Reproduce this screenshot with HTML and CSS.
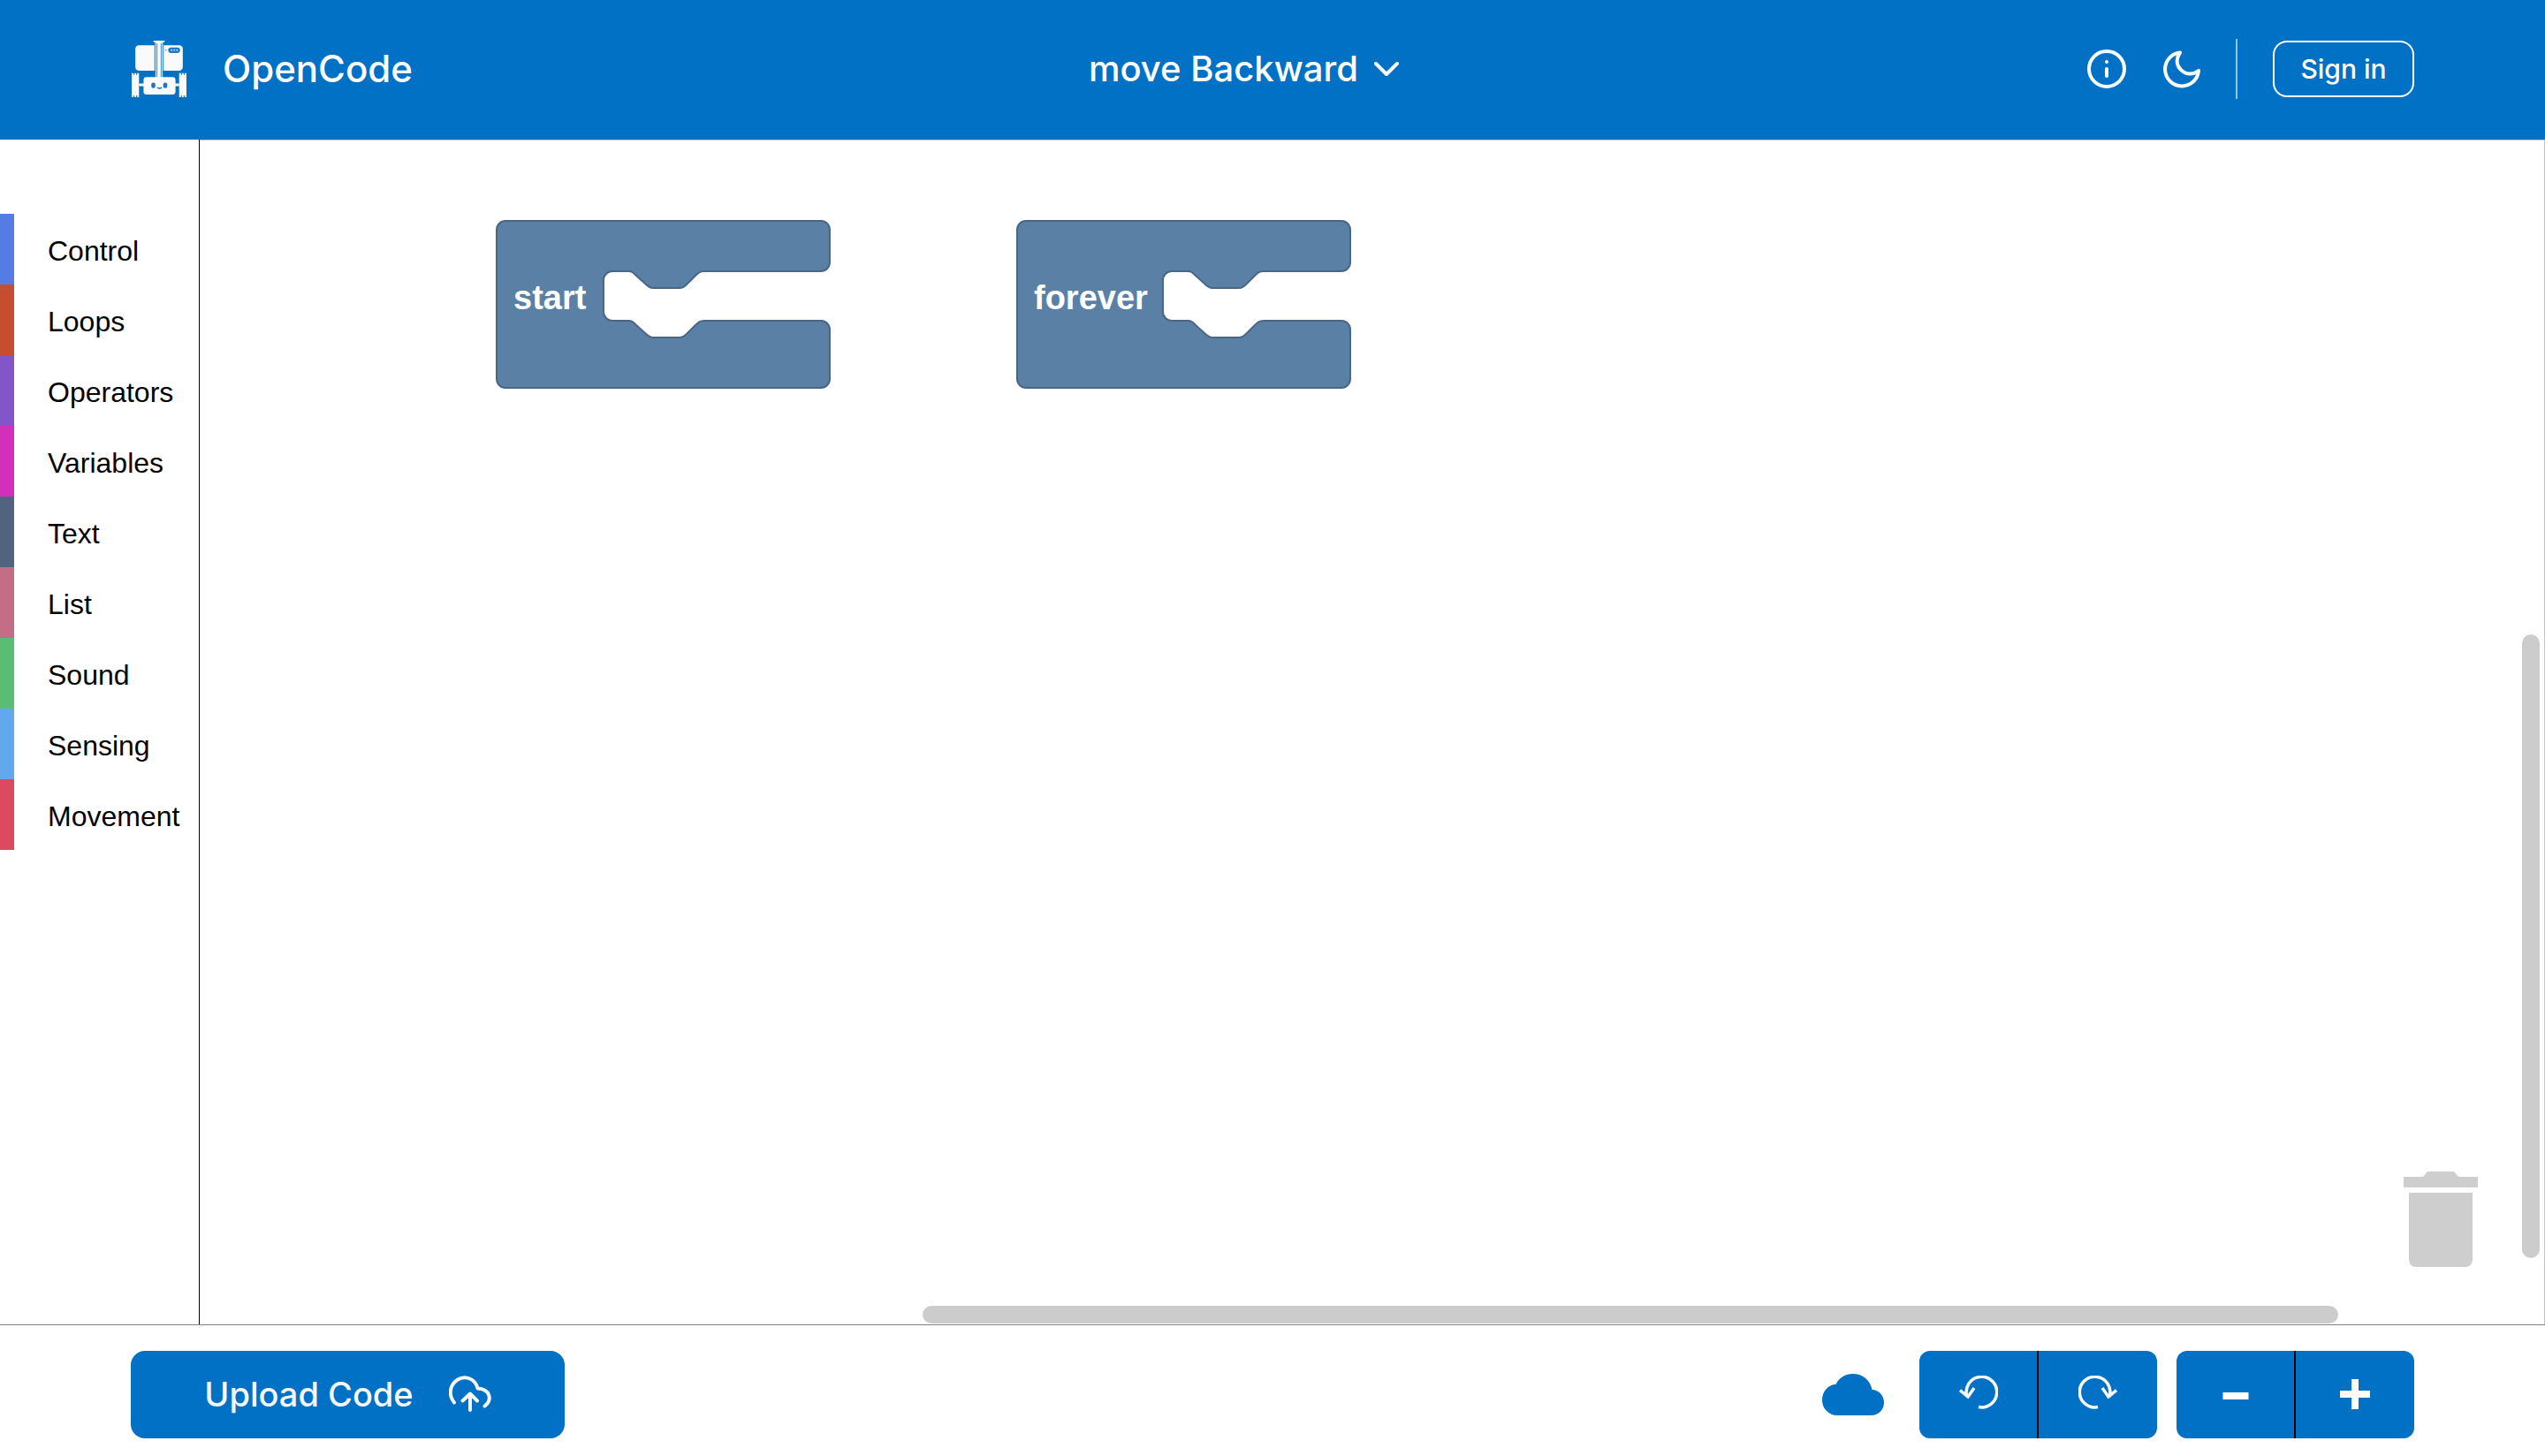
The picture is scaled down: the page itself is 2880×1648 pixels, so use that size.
FILE: index.html
```html
<!DOCTYPE html>
<html lang="en">
<head>
<meta charset="utf-8">
<title>OpenCode</title>
<link rel="stylesheet" href="styles.css">
</head>
<body>
<header class="topbar">
  <a class="brand" href="#">
    <svg class="brand-logo" width="64" height="64" viewBox="0 0 62 62" fill="#fafafa" aria-hidden="true">
      <path d="M9 5H26V33H9a4 4 0 0 1-4-4V9a4 4 0 0 1 4-4z"/>
      <path d="M36 5H53a4 4 0 0 1 4 4V29a4 4 0 0 1-4 4H36z"/>
      <path d="M25 0H37V2H35V41H27V2H25z"/>
      <path d="M28.500 3V41M33.500 3V41" stroke="#5a9fda" stroke-width="1.500"/>
      <path d="M26.500 3V33M35.500 3V33" stroke="#5a9fda" stroke-width="1"/>
      <rect x="41" y="7.500" width="13" height="6" rx="3" fill="#1d77c6"/>
      <path d="M44 10.500h1.500M47 10.500h1.500M50 10.500h1.500" stroke="#b9d8f0" stroke-width="2"/>
      <circle cx="38.500" cy="10.500" r="1" fill="#7db4e2"/>
      <path d="M9 47h6v3H9zM47 47h6v3h-6z"/>
      <rect x="14" y="40" width="35" height="19" rx="3"/>
      <path d="M1 35.500h2v2h1v-2h2v2h1v-2h2V62H7v-2H6v2H4v-2H3v2H1zM53 35.500h2v2h1v-2h2v2h1v-2h2V62h-2v-2h-1v2h-2v-2h-1v2h-2z"/>
      <rect x="22.500" y="46" width="4.500" height="6" rx="2.200" fill="#1d77c6"/>
      <rect x="35.500" y="46" width="4.500" height="6" rx="2.200" fill="#1d77c6"/>
      <path d="M29 51.500q2.500 1.500 5 0" fill="none" stroke="#1d77c6" stroke-width="1.500"/>
    </svg>
    <span>OpenCode</span>
  </a>
  <button class="project" type="button">
    <span>move Backward</span>
    <svg width="28" height="18" viewBox="0 0 28 18" fill="none" stroke="#fff" stroke-width="4" stroke-linecap="round" stroke-linejoin="round" aria-hidden="true"><path d="M2 3l12 12L26 3"/></svg>
  </button>
  <div class="tools">
    <button class="icon-button" type="button" aria-label="About">
      <svg width="44" height="44" viewBox="0 0 44 44" fill="none" stroke="#fff" stroke-width="4" stroke-linecap="round" aria-hidden="true"><circle cx="22" cy="22" r="20"/><path d="M22 22v8"/><circle cx="22" cy="14" r="2" fill="#fff" stroke="none"/></svg>
    </button>
    <button class="icon-button" type="button" aria-label="Dark mode">
      <svg width="44" height="44" viewBox="-2 -1 44 44" fill="none" stroke="#fff" stroke-width="4" stroke-linejoin="round" aria-hidden="true"><path d="M19 2.500A19 19 0 1 0 40 23C33 28.500 25 27.500 19.500 21.500C14.500 16 14.500 9 19 2.500z"/></svg>
    </button>
    <span class="divider"></span>
    <button class="signin" type="button">Sign in</button>
  </div>
</header>

<main class="editor">
  <nav class="toolbox" aria-label="Blocks">
    <a class="category control" href="#">Control</a>
    <a class="category loops" href="#">Loops</a>
    <a class="category operators" href="#">Operators</a>
    <a class="category variables" href="#">Variables</a>
    <a class="category text" href="#">Text</a>
    <a class="category list" href="#">List</a>
    <a class="category sound" href="#">Sound</a>
    <a class="category sensing" href="#">Sensing</a>
    <a class="category movement" href="#">Movement</a>
  </nav>
  <section class="workspace" aria-label="Workspace">
    <svg class="block block-start" width="381" height="193" viewBox="-2 -2 381 193">
      <path class="block-shape" d="M10 0H367a10 10 0 0 1 10 10V47a10 10 0 0 1-10 10H235c-5 0-7 2-10 5l-9 9c-3 3-5 5-10 5H177c-4 0-6-2-9-5l-10-9c-3-3-4-5-8-5H131a10 10 0 0 0-10 10V103a10 10 0 0 0 10 10H150c4 0 5 2 8 5l10 9c3 3 5 5 9 5H206c5 0 7-2 10-5l9-9c3-3 5-5 10-5H367a10 10 0 0 1 10 10V179a10 10 0 0 1-10 10H10a10 10 0 0 1-10-10V10A10 10 0 0 1 10 0z"/>
      <text class="block-label" x="19" y="100">start</text>
    </svg>
    <svg class="block block-forever" width="381" height="193" viewBox="-2 -2 381 193">
      <path class="block-shape" d="M10 0H367a10 10 0 0 1 10 10V47a10 10 0 0 1-10 10H279c-5 0-7 2-10 5l-9 9c-3 3-5 5-10 5H221c-4 0-6-2-9-5l-10-9c-3-3-4-5-8-5H175a10 10 0 0 0-10 10V103a10 10 0 0 0 10 10H194c4 0 5 2 8 5l10 9c3 3 5 5 9 5H250c5 0 7-2 10-5l9-9c3-3 5-5 10-5H367a10 10 0 0 1 10 10V179a10 10 0 0 1-10 10H10a10 10 0 0 1-10-10V10A10 10 0 0 1 10 0z"/>
      <text class="block-label" x="19" y="100">forever</text>
    </svg>
    <svg class="trash" width="84" height="108" viewBox="0 0 84 108" fill="#cecece" role="img" aria-label="Trash"><path d="M0 6H22L27 0H57L62 6H84V18H0zM6 24H78V100a8 8 0 0 1-8 8H14a8 8 0 0 1-8-8z"/></svg>
    <span class="scrollbar scrollbar-y"></span>
    <span class="scrollbar scrollbar-x"></span>
  </section>
</main>

<footer class="bottombar">
  <button class="upload" type="button">
    <span>Upload Code</span>
    <svg width="48" height="42" viewBox="0 0 48 42" fill="none" stroke="#f7f8fd" stroke-width="4" stroke-linecap="round" stroke-linejoin="round" aria-hidden="true"><path d="M6 30.500C-1 22 1 10 10 4.500C19-1 30 4 32.500 14.500C46 15 50 27 40.500 34.500M24 39V21M15.500 28.500L24 20.500L32 28.500"/></svg>
  </button>
  <div class="actions">
    <svg class="cloud" width="70" height="47" viewBox="0 0 70 47" fill="#0071c5" role="img" aria-label="Saved"><path d="M17 47A17 17 0 0 1 0 29.500C0 20 7 12 15.500 12C19 4.500 26 0 35 0C46 0 54.500 7.500 56.500 18C64 18 70 24.500 70 32.500S64 47 55.500 47z"/></svg>
    <div class="button-group">
      <button type="button" aria-label="Undo"><svg width="44" height="44" viewBox="0 1 44 44" fill="none" stroke="#f7f8fd" stroke-width="3.500" aria-hidden="true"><path d="M22 36.500A17.300 17.300 0 1 0 9 25M1 17.500L10 25L17 15"/></svg></button>
      <button type="button" aria-label="Redo"><svg width="44" height="44" viewBox="0 1 44 44" fill="none" stroke="#f7f8fd" stroke-width="3.500" aria-hidden="true"><path d="M22 36.500A17.300 17.300 0 1 1 35 25M43 17.500L34 25L27 15"/></svg></button>
    </div>
    <div class="button-group">
      <button type="button" aria-label="Zoom out"><svg width="36" height="36" viewBox="0 0 36 36" fill="#fff" aria-hidden="true"><path d="M3.500 15h29v8h-29z"/></svg></button>
      <button type="button" aria-label="Zoom in"><svg width="36" height="36" viewBox="0 0 36 36" fill="#fff" aria-hidden="true"><path d="M14 0h8v13h13v8H22v13h-8V21H1v-8h13z"/></svg></button>
    </div>
  </div>
</footer>
</body>
</html>
```
FILE: styles.css
```css
* { box-sizing: border-box; }

body {
  margin: 0;
  min-height: 100vh;
  display: flex;
  flex-direction: column;
  background: #fff;
  font-family: Inter, "Open Sans", sans-serif;
}

button {
  margin: 0;
  padding: 0;
  border: 0;
  background: none;
  color: inherit;
  font: inherit;
  cursor: pointer;
}

a { color: inherit; text-decoration: none; }
svg { display: block; flex: none; }

.topbar {
  display: flex;
  align-items: center;
  justify-content: space-between;
  padding: 44px 148px 46px;
  background: #0071c5;
  color: #fff;
  font-size: 40px;
  font-weight: 500;
  line-height: 48px;
}

.brand {
  display: flex;
  align-items: center;
  gap: 40px;
  font-size: 42px;
}

.project {
  display: flex;
  align-items: center;
  gap: 18px;
  padding-right: 14px;
}

.tools { display: flex; align-items: center; gap: 40px; }
.divider { width: 2px; height: 68px; background: #8cc6f2; }

.signin {
  width: 160px;
  height: 64px;
  border: 2px solid #fff;
  border-radius: 16px;
  font-size: 30px;
}

.editor { flex: 1; display: flex; }

.toolbox {
  width: 226px;
  padding-top: 84px;
  border-right: 1px solid #000;
  color: #000;
  font-family: "Liberation Sans", Arial, sans-serif;
  font-size: 32px;
}

.category {
  display: block;
  height: 80px;
  padding-left: 38px;
  border-left: 16px solid;
  line-height: 84px;
}

.control { border-left-color: #557be4; }
.loops { border-left-color: #c54e2f; }
.operators { border-left-color: #8255c8; }
.variables { border-left-color: #d22fba; }
.text { border-left-color: #50647f; }
.list { border-left-color: #c46d86; }
.sound { border-left-color: #5bbc74; }
.sensing { border-left-color: #62a8ec; }
.movement { border-left-color: #dc4a5f; }

.workspace {
  position: relative;
  flex: 1;
  overflow: hidden;
  border-top: 1px solid #c6c6c6;
  border-right: 1px solid #c6c6c6;
}

.block { position: absolute; top: 89px; }
.block-start { left: 334px; }
.block-forever { left: 923px; }
.block-shape { fill: #5b80a5; stroke: #496684; stroke-width: 2; }

.block-label {
  fill: #fff;
  font-family: "Liberation Sans", Arial, sans-serif;
  font-size: 38px;
  font-weight: 700;
}

.trash { position: absolute; right: 75px; bottom: 65px; }
.scrollbar { position: absolute; border-radius: 10px; background: #ccc; }
.scrollbar-y { right: 5px; top: 559px; bottom: 75px; width: 20px; }
.scrollbar-x { left: 818px; right: 233px; bottom: 1px; height: 20px; }

.bottombar {
  display: flex;
  justify-content: space-between;
  padding: 29px 148px 20px;
  border-top: 1px solid #808080;
}

.upload {
  display: flex;
  align-items: center;
  justify-content: center;
  gap: 40px;
  width: 491px;
  padding-bottom: 2px;
  border-radius: 16px;
  background: #0071c5;
  color: #f7f8fd;
  font-size: 38px;
  font-weight: 500;
}

.actions { display: flex; align-items: center; gap: 22px; }
.cloud { margin-right: 18px; }

.button-group {
  display: grid;
  grid-template-columns: 133px 136px;
  height: 99px;
  overflow: hidden;
  border-radius: 12px;
  background: #0071c5;
}

.button-group button {
  display: flex;
  align-items: center;
  justify-content: center;
}

.button-group button + button { border-left: 2px solid #000; }
```
